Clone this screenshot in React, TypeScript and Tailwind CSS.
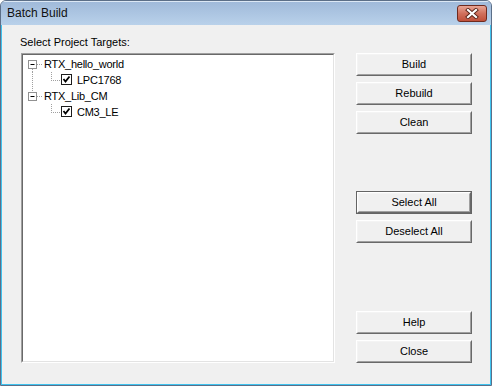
import React from "react";

function Btn({ label, def }: { label: string; def?: boolean }) {
  const face = (
    <div className="h-full w-full border border-t-white border-l-white border-r-[#696969] border-b-[#696969]">
      <div className="h-full w-full border border-t-[#f4f4f4] border-l-[#f4f4f4] border-r-[#a0a0a0] border-b-[#a0a0a0] bg-[#f0f0f0] flex items-center justify-center text-[11px] leading-none text-black">
        {label}
      </div>
    </div>
  );
  if (def) {
    return <div className="w-[116px] h-[23px] border border-[#646464]">{face}</div>;
  }
  return <div className="w-[116px] h-[23px]">{face}</div>;
}

function ParentRow({ label, first }: { label: string; first: boolean }) {
  return (
    <div className="flex h-[16px] items-center">
      <svg width="20" height="16" className="shrink-0">
        {!first && <line x1="9.5" y1="0" x2="9.5" y2="4" stroke="#a0a0a0" strokeDasharray="1 1" />}
        {first && <line x1="9.5" y1="13" x2="9.5" y2="16" stroke="#a0a0a0" strokeDasharray="1 1" />}
        <line x1="14" y1="8.5" x2="20" y2="8.5" stroke="#a0a0a0" strokeDasharray="1 1" />
        <rect x="5.5" y="4.5" width="8" height="8" fill="white" stroke="#919191" />
        <line x1="7.5" y1="8.5" x2="11.5" y2="8.5" stroke="#000" />
      </svg>
      <span className="ml-[1px] tracking-[-0.25px]">{label}</span>
    </div>
  );
}

function ChildRow({ label, rootLine }: { label: string; rootLine: boolean }) {
  return (
    <div className="flex h-[16px] items-center">
      <svg width="51" height="16" className="shrink-0">
        {rootLine && <line x1="9.5" y1="0" x2="9.5" y2="16" stroke="#a0a0a0" strokeDasharray="1 1" />}
        <line x1="28.5" y1="0" x2="28.5" y2="8" stroke="#a0a0a0" strokeDasharray="1 1" />
        <line x1="28" y1="8.5" x2="38" y2="8.5" stroke="#a0a0a0" strokeDasharray="1 1" />
        <rect x="38.5" y="2.5" width="10" height="10" fill="white" stroke="#1c1c1c" />
        <path d="M40.5 7 L42.5 9.5 L46.5 4.5" fill="none" stroke="#000" strokeWidth="1.8" />
      </svg>
      <span className="ml-[3px] tracking-[-0.25px]">{label}</span>
    </div>
  );
}

export default function App() {
  return (
    <div className="w-[492px] h-[386px] font-['Liberation_Sans',Arial,sans-serif] text-black">
      <div className="w-[492px] h-[386px] flex flex-col border border-[#5c6f88] rounded-t-[6px] overflow-hidden bg-[#b9d1ea]">
        <div className="h-[24px] flex shrink-0 bg-gradient-to-b from-[#a0bada] to-[#b9d1ea] border-t border-[#dce8f5]">
          <div className="flex-1 flex items-center pl-[6px] text-[12px] text-[#111] -mt-[1px]">Batch Build</div>
          <div className="mt-[3px] mr-[4px] w-[30px] h-[17px] rounded-[3px] border border-[#6f2a1e] bg-gradient-to-b from-[#e8a595] via-[#d0705c] to-[#c0503a] flex items-center justify-center">
            <svg width="14" height="11" viewBox="0 0 14 11">
              <path d="M3 2 L11 9 M11 2 L3 9" stroke="#5a2418" strokeWidth="4" strokeLinecap="square" />
              <path d="M3 2 L11 9 M11 2 L3 9" stroke="#ffffff" strokeWidth="2.2" strokeLinecap="square" />
            </svg>
          </div>
        </div>
        <div className="flex-1 flex bg-[#f0f0f0] border-x border-b border-[#3fc3ef] pl-[19px] pt-[11px] text-[11px]">
          <div className="flex flex-col">
            <div className="h-[13px] leading-[13px] -ml-[1px]">Select Project Targets:</div>
            <div className="mt-[4px] w-[314px] h-[310px] border border-t-[#a0a0a0] border-l-[#a0a0a0] border-r-white border-b-white">
              <div className="h-full w-full border border-t-[#696969] border-l-[#696969] border-r-[#e3e3e3] border-b-[#e3e3e3] bg-white pt-[1px]">
                <ParentRow label="RTX_hello_world" first={true} />
                <ChildRow label="LPC1768" rootLine={true} />
                <ParentRow label="RTX_Lib_CM" first={false} />
                <ChildRow label="CM3_LE" rootLine={false} />
              </div>
            </div>
          </div>
          <div className="ml-[21px] mt-[17px] flex flex-col">
            <Btn label="Build" />
            <div className="mt-[6px]"><Btn label="Rebuild" /></div>
            <div className="mt-[6px]"><Btn label="Clean" /></div>
            <div className="mt-[57px]"><Btn label="Select All" def /></div>
            <div className="mt-[6px]"><Btn label="Deselect All" /></div>
            <div className="mt-[68px]"><Btn label="Help" /></div>
            <div className="mt-[6px]"><Btn label="Close" /></div>
          </div>
        </div>
      </div>
    </div>
  );
}
